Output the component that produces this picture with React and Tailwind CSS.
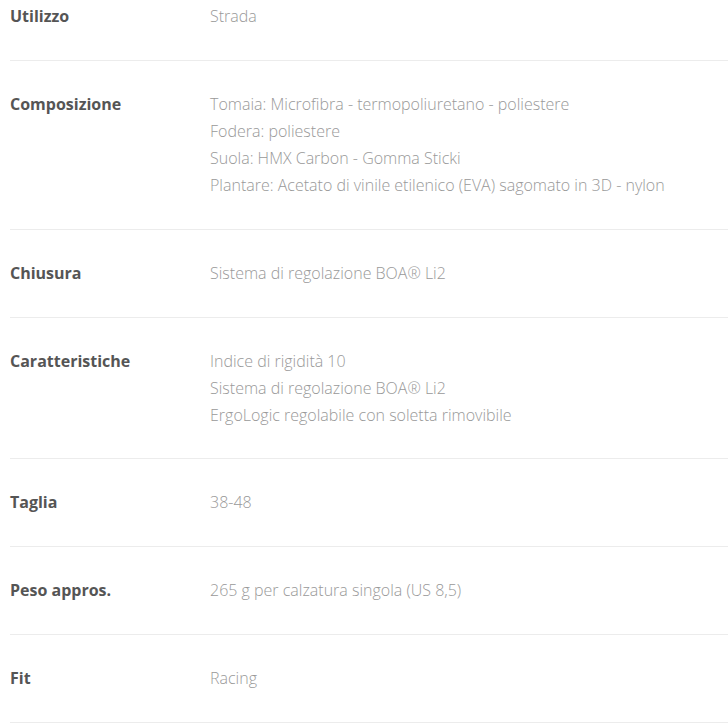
const specs = [
  { label: 'Utilizzo', values: ['Strada'] },
  {
    label: 'Composizione',
    values: [
      'Tomaia: Microfibra - termopoliuretano - poliestere',
      'Fodera: poliestere',
      'Suola: HMX Carbon - Gomma Sticki',
      'Plantare: Acetato di vinile etilenico (EVA) sagomato in 3D - nylon',
    ],
  },
  { label: 'Chiusura', values: ['Sistema di regolazione BOA® Li2'] },
  {
    label: 'Caratteristiche',
    values: [
      'Indice di rigidità 10',
      'Sistema di regolazione BOA® Li2',
      'ErgoLogic regolabile con soletta rimovibile',
    ],
    tight: true,
  },
  { label: 'Taglia', values: ['38-48'] },
  { label: 'Peso appros.', values: ['265 g per calzatura singola (US 8,5)'] },
  { label: 'Fit', values: ['Racing'] },
]

function SpecRow({ label, values, tight }) {
  // the 3-line row is a pixel shorter in the original
  return (
    <div className={tight ? 'flex border-b border-[#ececec] pt-[30px] pb-[29px]' : 'flex border-b border-[#ececec] py-[30px]'}>
      <div className="w-[200px] shrink-0 text-[16px] font-bold leading-[27px] text-[#555555]">{label}</div>
      <div className="flex flex-col text-[16px] font-light leading-[27px] text-[#999999]">
        {values.map((value) => (
          <span key={value}>{value}</span>
        ))}
      </div>
    </div>
  )
}

export default function App() {
  return (
    <div className="min-h-screen overflow-hidden bg-white font-['Open_Sans',sans-serif]">
      <div className="ml-[10px] -mt-[27px]">
        {specs.map((spec) => (
          <SpecRow key={spec.label} {...spec} />
        ))}
      </div>
    </div>
  )
}
